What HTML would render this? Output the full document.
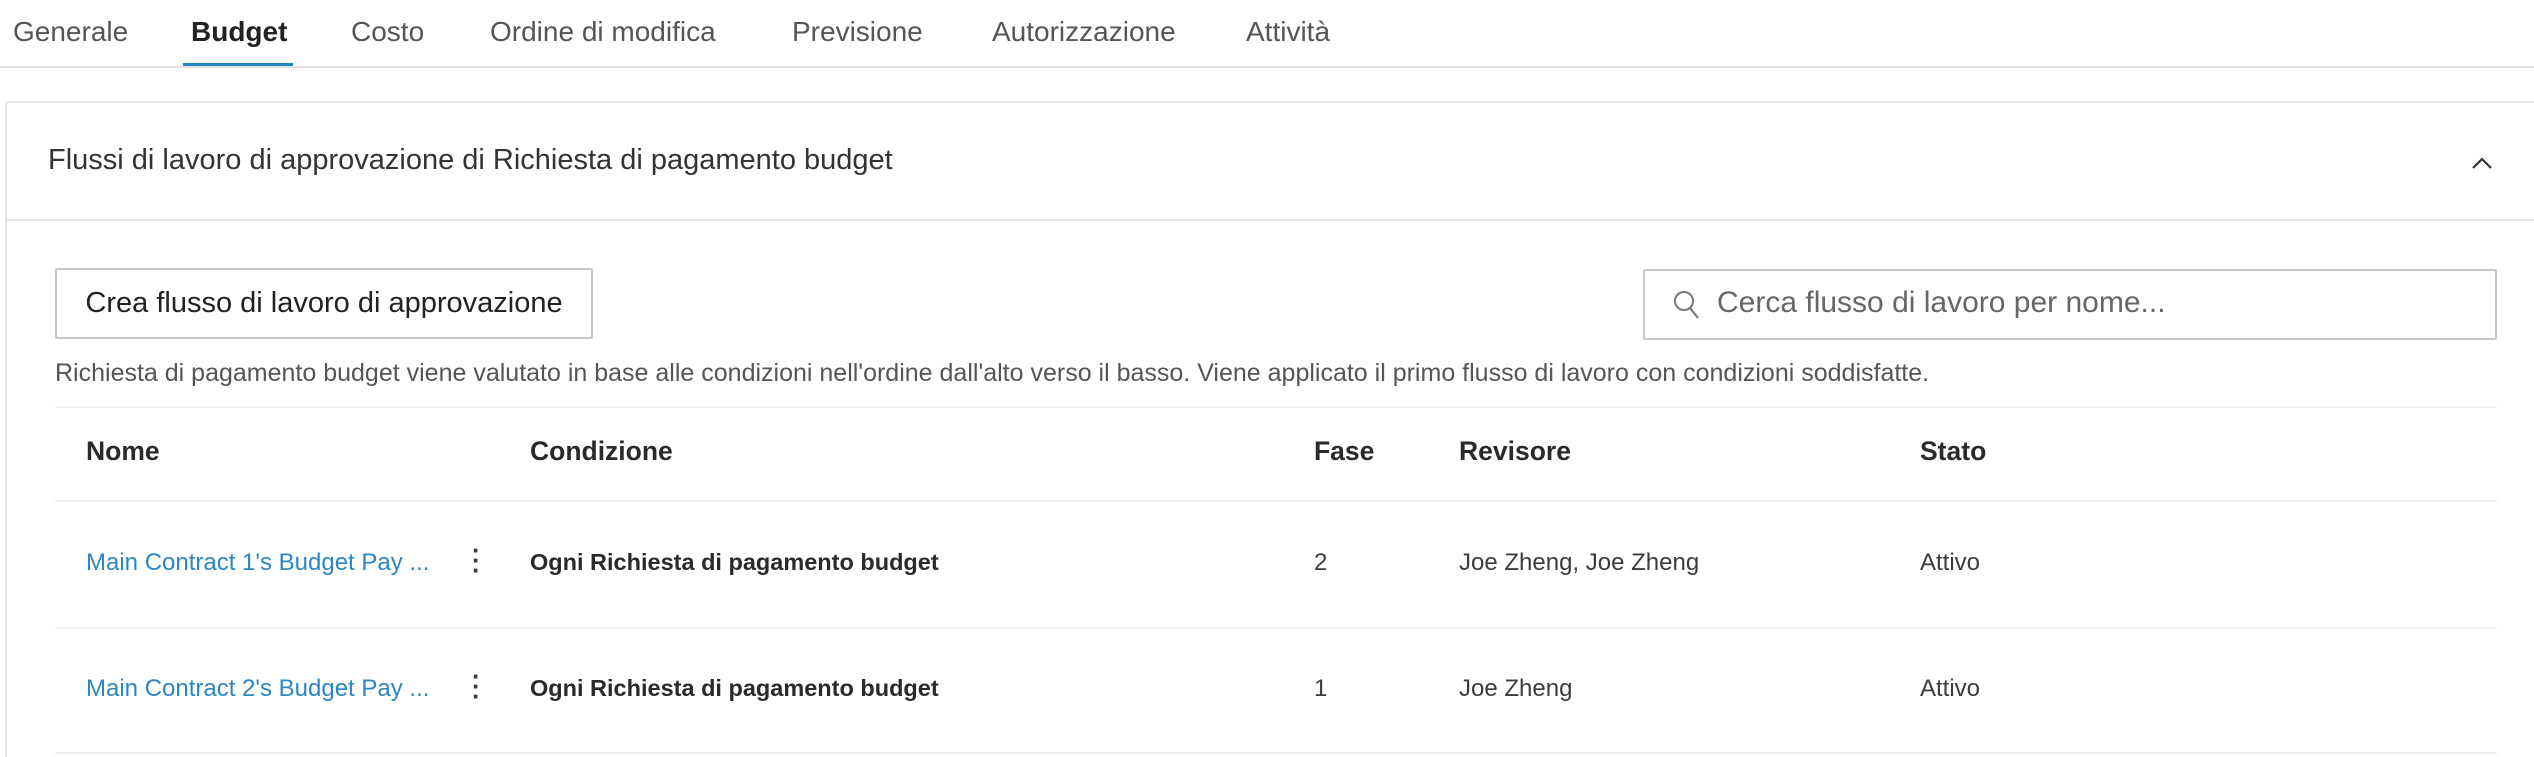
<!DOCTYPE html>
<html><head><meta charset="utf-8"><style>
*{margin:0;padding:0;box-sizing:border-box}
html{width:2534px;height:757px;overflow:hidden}
body{width:2534px;height:757px;background:#fff;font-family:"Liberation Sans",sans-serif;color:#3c3c3c;position:relative;overflow:hidden}
.a{position:absolute;white-space:nowrap}
.tab{top:16px;font-size:28px;color:#555}
</style></head><body>
<div class="a tab" style="left:13px">Generale</div>
<div class="a tab" style="left:191px;color:#222;font-weight:bold">Budget</div>
<div class="a tab" style="left:351px">Costo</div>
<div class="a tab" style="left:490px">Ordine di modifica</div>
<div class="a tab" style="left:792px">Previsione</div>
<div class="a tab" style="left:992px">Autorizzazione</div>
<div class="a tab" style="left:1246px">Attività</div>
<div class="a" style="left:183px;top:63px;width:110px;height:4px;background:#1e88c7"></div>
<div class="a" style="left:0;top:66px;width:2534px;height:2px;background:#e2e2e2"></div>
<div class="a" style="left:5px;top:101px;width:2540px;height:664px;border:2px solid #e4e4e4;border-radius:4px"></div>
<div class="a" style="left:48px;top:144px;font-size:29px;color:#333">Flussi di lavoro di approvazione di Richiesta di pagamento budget</div>
<svg class="a" style="left:2470px;top:155px" width="24" height="16" viewBox="0 0 24 16"><path d="M3 13 L12 4 L21 13" fill="none" stroke="#333" stroke-width="2.2"/></svg>
<div class="a" style="left:7px;top:219px;width:2527px;height:2px;background:#e4e4e4"></div>
<div class="a" style="left:55px;top:268px;width:538px;height:71px;border:2px solid #c8c8c8;border-radius:2px;font-size:29px;line-height:67px;text-align:center;color:#222">Crea flusso di lavoro di approvazione</div>
<div class="a" style="left:1643px;top:269px;width:854px;height:71px;border:2px solid #c8c8c8;border-radius:2px"></div>
<svg class="a" style="left:1672px;top:288px" width="30" height="34" viewBox="0 0 30 34"><circle cx="12" cy="13" r="9" fill="none" stroke="#777" stroke-width="2"/><path d="M18 20 L26 30" stroke="#777" stroke-width="2.2"/></svg>
<div class="a" style="left:1717px;top:286px;font-size:30px;color:#666">Cerca flusso di lavoro per nome...</div>
<div class="a" style="left:55px;top:359px;font-size:25px;color:#555">Richiesta di pagamento budget viene valutato in base alle condizioni nell'ordine dall'alto verso il basso. Viene applicato il primo flusso di lavoro con condizioni soddisfatte.</div>
<div class="a" style="left:55px;top:406px;width:2442px;height:2px;background:#f0f0f0"></div>
<div class="a" style="left:55px;top:500px;width:2442px;height:2px;background:#eee"></div>
<div class="a" style="left:55px;top:627px;width:2442px;height:2px;background:#eee"></div>
<div class="a" style="left:55px;top:752px;width:2442px;height:2px;background:#eee"></div>
<div style="font-size:26.5px;font-weight:bold;color:#2a2a2a">
<div class="a" style="left:86px;top:436px">Nome</div>
<div class="a" style="left:530px;top:436px">Condizione</div>
<div class="a" style="left:1314px;top:436px">Fase</div>
<div class="a" style="left:1459px;top:436px">Revisore</div>
<div class="a" style="left:1920px;top:436px">Stato</div>
</div>
<div style="font-size:24px">
<div class="a" style="left:86px;top:549px;color:#2b86c2">Main Contract 1's Budget Pay ...</div>
<div class="a" style="left:472px;top:545px;font-size:26px;font-weight:bold;line-height:10px;width:6px;">·<br>·<br>·</div>
<div class="a" style="left:530px;top:549px;font-weight:bold;font-size:23.5px;color:#2a2a2a">Ogni Richiesta di pagamento budget</div>
<div class="a" style="left:1314px;top:549px">2</div>
<div class="a" style="left:1459px;top:549px">Joe Zheng, Joe Zheng</div>
<div class="a" style="left:1920px;top:549px">Attivo</div>
<div class="a" style="left:86px;top:675px;color:#2b86c2">Main Contract 2's Budget Pay ...</div>
<div class="a" style="left:472px;top:671px;font-size:26px;font-weight:bold;line-height:10px;width:6px;">·<br>·<br>·</div>
<div class="a" style="left:530px;top:675px;font-weight:bold;font-size:23.5px;color:#2a2a2a">Ogni Richiesta di pagamento budget</div>
<div class="a" style="left:1314px;top:675px">1</div>
<div class="a" style="left:1459px;top:675px">Joe Zheng</div>
<div class="a" style="left:1920px;top:675px">Attivo</div>
</div>
</body></html>
